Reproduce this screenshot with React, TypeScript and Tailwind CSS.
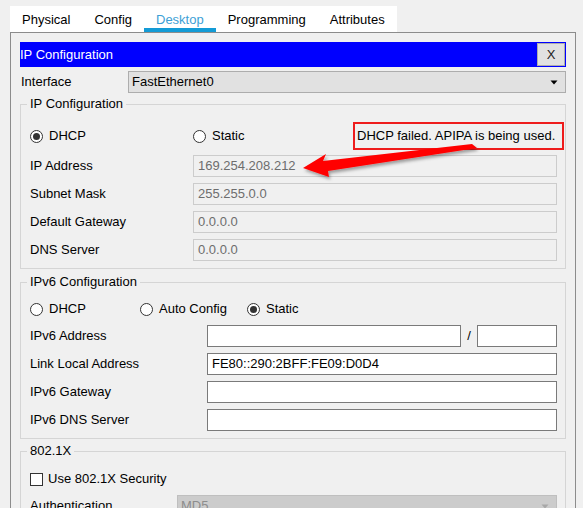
import React from "react";

function Radio({ checked, label }: { checked?: boolean; label: string }) {
  return (
    <div className="flex items-center gap-[6px]">
      <span className="w-[13px] h-[13px] rounded-full border border-[#333333] bg-white flex items-center justify-center shrink-0">
        {checked && <span className="w-[7px] h-[7px] rounded-full bg-[#333333]" />}
      </span>
      <span>{label}</span>
    </div>
  );
}

function DisabledInput({ value }: { value: string }) {
  return (
    <div className="flex-1 h-[22px] border border-[#cccccc] bg-[#f0f0f0] text-[#6d6d6d] pl-[4px] flex items-center">
      {value}
    </div>
  );
}

function WhiteInput({ value, className }: { value?: string; className?: string }) {
  return (
    <div
      className={
        "h-[22px] border border-[#7a7a7a] bg-white text-black pl-[4px] flex items-center " +
        (className || "")
      }
    >
      {value}
    </div>
  );
}

function Arrow({ color }: { color: string }) {
  return (
    <svg width="8" height="5" viewBox="0 0 8 5">
      <path d="M0.5 0.5 L7.5 0.5 L4 4.5 Z" fill={color} />
    </svg>
  );
}

export default function App() {
  const tabs = ["Physical", "Config", "Desktop", "Programming", "Attributes"];
  return (
    <div className="relative w-[583px] h-[508px] overflow-hidden bg-[#f0f0f0] text-[13px] text-black font-['Liberation_Sans','Arial',sans-serif]">
      {/* Tab bar */}
      <div className="pt-[6px] pl-[10px] flex">
        <div className="flex bg-white h-[26px]">
          {tabs.map((t) => (
            <div
              key={t}
              className={
                t === "Desktop"
                  ? "px-[12px] pt-[2px] h-[26px] flex items-center text-[#3d9fd6] shadow-[inset_0_-4px_0_#139bd6]"
                  : "px-[12px] pt-[2px] h-[26px] flex items-center"
              }
            >
              {t}
            </div>
          ))}
        </div>
      </div>

      {/* Panel */}
      <div className="ml-[10px] w-[566px] h-[480px] border border-b-0 border-[#8c8c8c] pt-[9px] px-[9px]">
        {/* Title bar */}
        <div className="h-[25px] bg-[#0000ff] flex items-center justify-between">
          <span className="text-white leading-[16px] pt-[1px]">IP Configuration</span>
          <div className="w-[28px] h-[23px] mr-[1px] bg-[#e1e1e1] border border-[#adadad] flex items-center justify-center text-[#222]">
            X
          </div>
        </div>

        {/* Interface */}
        <div className="mt-[4px] flex items-center h-[22px]">
          <div className="w-[108px] pl-[1px]">Interface</div>
          <div className="flex-1 h-[22px] bg-[#e1e1e1] border border-[#adadad] pl-[3px] pr-[7px] flex items-center justify-between">
            <span>FastEthernet0</span>
            <Arrow color="#000000" />
          </div>
        </div>

        {/* IP Configuration */}
        <fieldset className="mt-[3px] w-[546px] border border-[#d5d5d5] p-0 pb-[4px]">
          <legend className="ml-[6px] px-[3px] leading-[16px]">IP Configuration</legend>
          <div className="pl-[9px] pr-[8px]">
            <div className="mt-[11px] h-[26px] flex items-center">
              <div className="w-[163px]">
                <Radio checked label="DHCP" />
              </div>
              <Radio label="Static" />
              <div className="ml-auto -mr-[7px] w-[211px] h-[28px] border-2 border-[#ee1c1c] pl-[2px] flex items-center">
                DHCP failed. APIPA is being used.
              </div>
            </div>
            <div className="mt-[3px]">
              {[
                ["IP Address", "169.254.208.212"],
                ["Subnet Mask", "255.255.0.0"],
                ["Default Gateway", "0.0.0.0"],
                ["DNS Server", "0.0.0.0"],
              ].map(([l, v]) => (
                <div key={l} className="h-[28px] flex items-center">
                  <div className="w-[163px] shrink-0">{l}</div>
                  <DisabledInput value={v} />
                </div>
              ))}
            </div>
          </div>
        </fieldset>

        {/* IPv6 Configuration */}
        <fieldset className="mt-[5px] w-[546px] border border-[#d5d5d5] p-0 pb-[4px]">
          <legend className="ml-[6px] px-[3px] leading-[16px]">IPv6 Configuration</legend>
          <div className="pl-[9px] pr-[8px]">
            <div className="mt-[6px] h-[26px] flex items-center">
              <div className="w-[110px]">
                <Radio label="DHCP" />
              </div>
              <div className="w-[107px]">
                <Radio label="Auto Config" />
              </div>
              <Radio checked label="Static" />
            </div>
            <div>
              <div className="h-[28px] flex items-center">
                <div className="w-[177px] shrink-0">IPv6 Address</div>
                <WhiteInput className="flex-1" />
                <div className="w-[16px] text-center">/</div>
                <WhiteInput className="w-[80px]" />
              </div>
              <div className="h-[28px] flex items-center">
                <div className="w-[177px] shrink-0">Link Local Address</div>
                <WhiteInput className="flex-1" value="FE80::290:2BFF:FE09:D0D4" />
              </div>
              <div className="h-[28px] flex items-center">
                <div className="w-[177px] shrink-0">IPv6 Gateway</div>
                <WhiteInput className="flex-1" />
              </div>
              <div className="h-[28px] flex items-center">
                <div className="w-[177px] shrink-0">IPv6 DNS Server</div>
                <WhiteInput className="flex-1" />
              </div>
            </div>
          </div>
        </fieldset>

        {/* 802.1X */}
        <fieldset className="mt-[4px] w-[546px] border border-[#d5d5d5] p-0 pb-[4px]">
          <legend className="ml-[6px] px-[3px] leading-[16px]">802.1X</legend>
          <div className="pl-[9px] pr-[8px]">
            <div className="mt-[7px] h-[26px] flex items-center gap-[5px]">
              <span className="w-[13px] h-[13px] border border-[#333333] bg-white shrink-0" />
              <span>Use 802.1X Security</span>
            </div>
            <div className="h-[28px] flex items-center">
              <div className="w-[147px] shrink-0">Authentication</div>
              <div className="flex-1 h-[22px] bg-[#cccccc] border border-[#bfbfbf] text-[#8d8d8d] pl-[3px] pr-[7px] flex items-center justify-between">
                <span>MD5</span>
                <Arrow color="#a8a8a8" />
              </div>
            </div>
          </div>
        </fieldset>
      </div>

      {/* Annotation arrow */}
      <svg
        className="absolute left-0 top-0 pointer-events-none"
        width="583"
        height="508"
        viewBox="0 0 583 508"
      >
        <defs>
          <filter id="sh" x="-10%" y="-50%" width="120%" height="200%">
            <feDropShadow dx="1.5" dy="2.5" stdDeviation="1.5" floodColor="#000" floodOpacity="0.35" />
          </filter>
        </defs>
        <polygon
          points="303,168 326,154 323,161 472,144 477,148 328,171 329,177"
          fill="#ff0000"
          filter="url(#sh)"
        />
      </svg>
    </div>
  );
}
